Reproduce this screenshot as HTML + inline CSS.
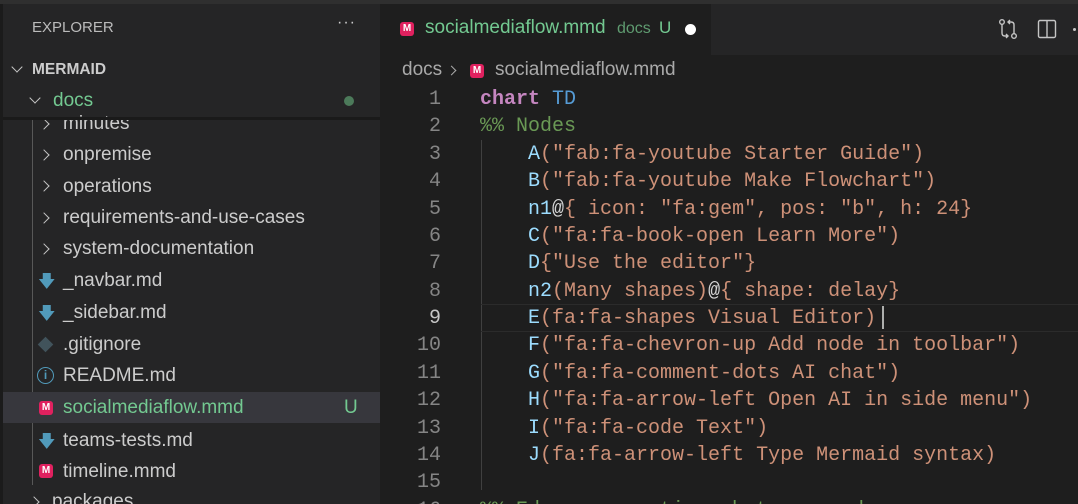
<!DOCTYPE html>
<html style="overflow:hidden;width:1078px;height:504px"><head><style>
*{margin:0;padding:0;box-sizing:border-box}
body{width:1078px;height:504px;overflow:hidden;background:#1e1e1e;font-family:"Liberation Sans",sans-serif;position:relative}
.top{position:absolute;left:0;top:0;width:1078px;height:4px;background:#2f2f2f}
.side{position:absolute;left:0;top:4px;width:380px;height:500px;background:#252526}
.lstrip{position:absolute;left:0;top:4px;width:3px;height:500px;background:#1b1b1b}
.t{position:absolute;font-size:19px;color:#cccccc;white-space:nowrap}
.chev{position:absolute;width:8px;height:8px;border-right:1.5px solid #c5c5c5;border-bottom:1.5px solid #c5c5c5}
.r{transform:rotate(-45deg)}
.d{transform:rotate(45deg)}
.mm{position:absolute;width:14px;height:14px;background:#e0215f;border-radius:3px;color:#fff;font-size:10px;font-weight:bold;text-align:center;line-height:14px}
.dl{position:absolute;color:#519aba;font-size:17px}
.code{position:absolute;left:0;font-family:"Liberation Mono",monospace;font-size:20px;white-space:pre;line-height:27.4px;height:27.4px}
.ln{position:absolute;width:60px;left:381px;text-align:right;color:#858585}
.k{color:#c586c0;font-weight:bold}.b{color:#569cd6}.g{color:#6a9955}.v{color:#9cdcfe}.s{color:#ce9178}.w{color:#d4d4d4}
</style></head><body>
<div class="top"></div>
<div class="side"></div>
<div class="lstrip"></div>
<div class="t" style="left:32px;top:19px;font-size:15px;color:#bbbbbb">EXPLORER</div>
<div class="t" style="left:337px;top:14px;font-size:16px;letter-spacing:1px">···</div>
<div class="chev d" style="left:13px;top:63px"></div>
<div class="t" style="left:32px;top:61px;font-size:15.5px;font-weight:bold">MERMAID</div>
<div class="chev d" style="left:31px;top:94px"></div>
<div class="t" style="left:53px;top:90px;color:#73c991">docs</div>
<div style="position:absolute;left:344px;top:96px;width:10px;height:10px;border-radius:50%;background:#4c7a5a"></div>
<div style="position:absolute;left:32px;top:120px;width:1px;height:365px;background:#585858"></div>
<div class="t" style="left:63px;top:113px;">minutes</div><div class="chev r" style="left:40px;top:120px"></div>
<div style="position:absolute;left:3px;top:117px;width:377px;height:3px;background:#1a1a1a"></div>
<div class="t" style="left:63px;top:144px;">onpremise</div><div class="chev r" style="left:40px;top:151px"></div>
<div class="t" style="left:63px;top:176px;">operations</div><div class="chev r" style="left:40px;top:182px"></div>
<div class="t" style="left:63px;top:207px;">requirements-and-use-cases</div><div class="chev r" style="left:40px;top:214px"></div>
<div class="t" style="left:63px;top:238px;">system-documentation</div><div class="chev r" style="left:40px;top:245px"></div>
<div class="dl" style="left:38px;top:269px">🡇</div><div class="t" style="left:63px;top:270px;">_navbar.md</div>
<div class="dl" style="left:38px;top:301px">🡇</div><div class="t" style="left:63px;top:302px;">_sidebar.md</div>
<div style="position:absolute;left:40px;top:339px;width:11px;height:11px;background:#41535b;transform:rotate(45deg)"></div><div class="t" style="left:63px;top:334px;">.gitignore</div>
<div style="position:absolute;left:37px;top:367px;width:17px;height:17px;border:1.5px solid #519aba;border-radius:50%;color:#519aba;font-size:12px;text-align:center;line-height:14px;font-weight:bold">i</div><div class="t" style="left:63px;top:365px;">README.md</div>
<div style="position:absolute;left:3px;top:392px;width:377px;height:31px;background:#37373d"></div>
<div class="mm" style="left:39px;top:401px">M</div><div class="t" style="left:63px;top:397px;color:#73c991">socialmediaflow.mmd</div><div class="t" style="left:344px;top:397px;color:#73c991">U</div>
<div class="dl" style="left:38px;top:429px">🡇</div><div class="t" style="left:63px;top:430px;">teams-tests.md</div>
<div class="mm" style="left:39px;top:464px">M</div><div class="t" style="left:63px;top:461px;">timeline.mmd</div>
<div class="chev r" style="left:30px;top:498px"></div><div class="t" style="left:52px;top:491px;">packages</div>

<div style="position:absolute;left:380px;top:4px;width:698px;height:51px;background:#252526"></div>
<div style="position:absolute;left:380px;top:4px;width:331px;height:51px;background:#1e1e1e"></div>
<div class="mm" style="left:400px;top:22px">M</div>
<div class="t" style="left:425px;top:17px;color:#73c991">socialmediaflow.mmd</div>
<div class="t" style="left:617px;top:20px;color:#5f9b70;font-size:16px">docs</div>
<div class="t" style="left:659px;top:18px;color:#73c991;font-size:17px">U</div>
<div style="position:absolute;left:685px;top:24px;width:11px;height:11px;border-radius:50%;background:#fff"></div>
<svg style="position:absolute;left:996px;top:17px" width="24" height="24" viewBox="0 0 24 24" fill="none" stroke="#c5c5c5" stroke-width="1.4"><circle cx="6" cy="5" r="2.3"/><circle cx="18" cy="19" r="2.3"/><path d="M6 7.3V16q0 3 3 3h3M18 16.7V8q0-3-3-3h-3M14 3l-2 2 2 2M10 17l2 2-2 2"/></svg>
<svg style="position:absolute;left:1037px;top:19px" width="20" height="20" viewBox="0 0 20 20" fill="none" stroke="#c5c5c5" stroke-width="1.4"><rect x="1.5" y="1.5" width="17" height="17" rx="1.5"/><path d="M10 1.5v17"/></svg>
<div style="position:absolute;left:1073px;top:28px;width:3px;height:3px;background:#c5c5c5;border-radius:50%"></div>

<div class="t" style="left:402px;top:59px;color:#a9a9a9">docs</div>
<div class="chev r" style="left:448px;top:67px;border-color:#a9a9a9;width:7px;height:7px"></div>
<div class="mm" style="left:470px;top:64px">M</div>
<div class="t" style="left:495px;top:59px;color:#a9a9a9">socialmediaflow.mmd</div>

<div style="position:absolute;left:481px;top:140px;width:1px;height:350px;background:#404040"></div>
<div style="position:absolute;left:481px;top:304px;width:597px;height:28px;border-top:1px solid #2b2b2b;border-bottom:1px solid #2b2b2b"></div>
<div style="position:absolute;left:882px;top:306px;width:2px;height:23px;background:#aeafad"></div>

<div class="ln code" style="top:86px">1</div><div class="code" style="left:480px;top:86px"><span class="k">chart</span> <span class="b">TD</span></div>
<div class="ln code" style="top:113px">2</div><div class="code g" style="left:480px;top:113px">%% Nodes</div>
<div class="ln code" style="top:141px">3</div><div class="code s" style="left:480px;top:141px">    <span class="v">A</span>("fab:fa-youtube Starter Guide")</div>
<div class="ln code" style="top:168px">4</div><div class="code s" style="left:480px;top:168px">    <span class="v">B</span>("fab:fa-youtube Make Flowchart")</div>
<div class="ln code" style="top:196px">5</div><div class="code s" style="left:480px;top:196px">    <span class="v">n1</span><span class="w">@</span>{ icon: "fa:gem", pos: "b", h: 24}</div>
<div class="ln code" style="top:223px">6</div><div class="code s" style="left:480px;top:223px">    <span class="v">C</span>("fa:fa-book-open Learn More")</div>
<div class="ln code" style="top:250px">7</div><div class="code s" style="left:480px;top:250px">    <span class="v">D</span>{"Use the editor"}</div>
<div class="ln code" style="top:278px">8</div><div class="code s" style="left:480px;top:278px">    <span class="v">n2</span>(Many shapes)<span class="w">@</span>{ shape: delay}</div>
<div class="ln code" style="top:305px;color:#c6c6c6">9</div><div class="code s" style="left:480px;top:305px">    <span class="v">E</span>(fa:fa-shapes Visual Editor)</div>
<div class="ln code" style="top:332px">10</div><div class="code s" style="left:480px;top:332px">    <span class="v">F</span>("fa:fa-chevron-up Add node in toolbar")</div>
<div class="ln code" style="top:360px">11</div><div class="code s" style="left:480px;top:360px">    <span class="v">G</span>("fa:fa-comment-dots AI chat")</div>
<div class="ln code" style="top:387px">12</div><div class="code s" style="left:480px;top:387px">    <span class="v">H</span>("fa:fa-arrow-left Open AI in side menu")</div>
<div class="ln code" style="top:415px">13</div><div class="code s" style="left:480px;top:415px">    <span class="v">I</span>("fa:fa-code Text")</div>
<div class="ln code" style="top:442px">14</div><div class="code s" style="left:480px;top:442px">    <span class="v">J</span>(fa:fa-arrow-left Type Mermaid syntax)</div>
<div class="ln code" style="top:469px">15</div>
<div style="position:absolute;left:380px;top:490px;width:698px;height:14px;overflow:hidden">
<div class="ln code" style="top:7px;left:1px">16</div><div class="code g" style="left:100px;top:7px">%% Edges connections between nodes</div>
</div>
</body></html>
